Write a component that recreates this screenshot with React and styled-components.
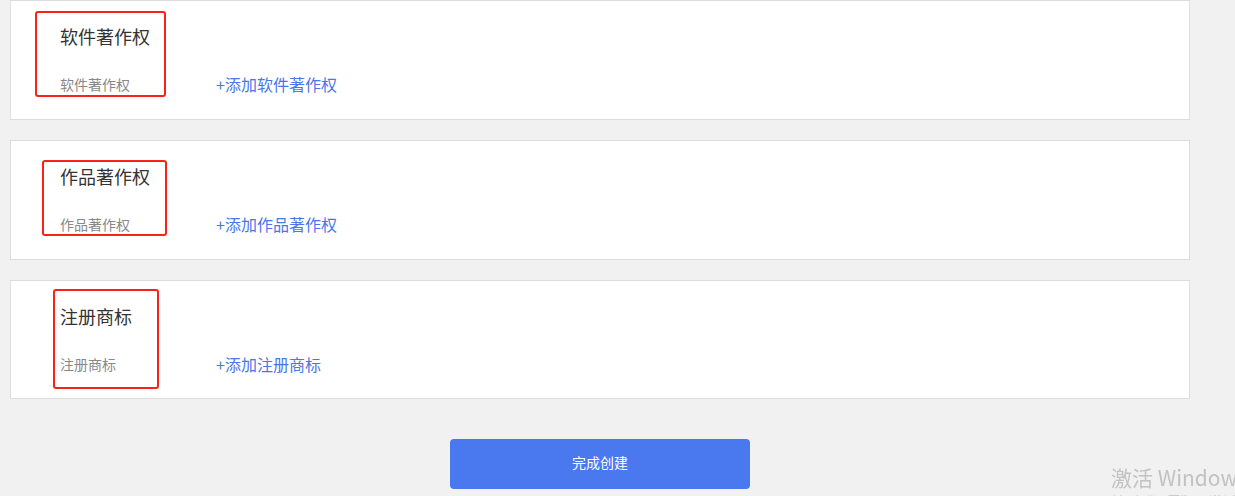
import React from "react";
import styled, { createGlobalStyle } from "styled-components";

const GlobalStyle = createGlobalStyle`
  html, body {
    margin: 0;
    padding: 0;
    background: #f1f1f1;
    font-family: "Noto Sans CJK SC", "Noto Sans", "Liberation Sans", sans-serif;
    overflow: hidden;
  }
`;

const Page = styled.div`
  width: 1180px;
  padding-left: 10px;
  display: flex;
  flex-direction: column;
  gap: 20px;
`;

const Card = styled.section`
  position: relative;
  box-sizing: border-box;
  height: ${(p) => p.$h || 120}px;
  background: #fff;
  border: 1px solid #dddddd;
  padding: 23px 0 0 49px;
`;

const Title = styled.div`
  font-size: 18px;
  line-height: 24px;
  color: #333;
`;

const Row = styled.div`
  margin-top: 24px;
  display: flex;
  align-items: center;
  height: 24px;
`;

const Label = styled.span`
  width: 156px;
  font-size: 14px;
  color: #888;
  line-height: 24px;
`;

const AddLink = styled.a`
  font-size: 16px;
  color: #4a76e8;
  text-decoration: none;
  line-height: 24px;
  cursor: pointer;
`;

const Mark = styled.div`
  position: absolute;
  box-sizing: border-box;
  left: ${(p) => p.$x}px;
  top: ${(p) => p.$y}px;
  width: ${(p) => p.$w}px;
  height: ${(p) => p.$hh}px;
  border: 2px solid #fa2116;
  border-radius: 3px;
  pointer-events: none;
`;

const Footer = styled.div`
  display: flex;
  justify-content: center;
  padding-top: 20px;
`;

const Submit = styled.button`
  width: 300px;
  height: 50px;
  padding: 0 0 5px;
  border: none;
  border-radius: 4px;
  background: #4a78ee;
  color: #fff;
  font-family: inherit;
  font-size: 14px;
  cursor: pointer;
`;

const Watermark = styled.div`
  position: fixed;
  left: 1111px;
  top: 471px;
  color: #c2c2c2;
  white-space: nowrap;
  pointer-events: none;
`;

const WmTitle = styled.div`
  font-size: 21px;
  line-height: 28px;
  margin-top: -8px;
`;

const WmSub = styled.div`
  font-size: 14px;
  line-height: 18px;
  margin-top: 1px;
`;

const items = [
  { title: "软件著作权", add: "+添加软件著作权", mark: [24, 10, 131, 86] },
  { title: "作品著作权", add: "+添加作品著作权", mark: [31, 19, 125, 76] },
  { title: "注册商标", add: "+添加注册商标", mark: [42, 8, 106, 100], h: 119 },
];

export default function App() {
  return (
    <>
      <GlobalStyle />
      <Page>
        {items.map((it) => (
          <Card key={it.title} $h={it.h}>
            <Title>{it.title}</Title>
            <Row>
              <Label>{it.title}</Label>
              <AddLink>{it.add}</AddLink>
            </Row>
            <Mark $x={it.mark[0]} $y={it.mark[1]} $w={it.mark[2]} $hh={it.mark[3]} />
          </Card>
        ))}
        <Footer>
          <Submit>完成创建</Submit>
        </Footer>
      </Page>
      <Watermark>
        <WmTitle>激活 Windows</WmTitle>
        <WmSub>转到“设置”以激活 Windows。</WmSub>
      </Watermark>
    </>
  );
}
